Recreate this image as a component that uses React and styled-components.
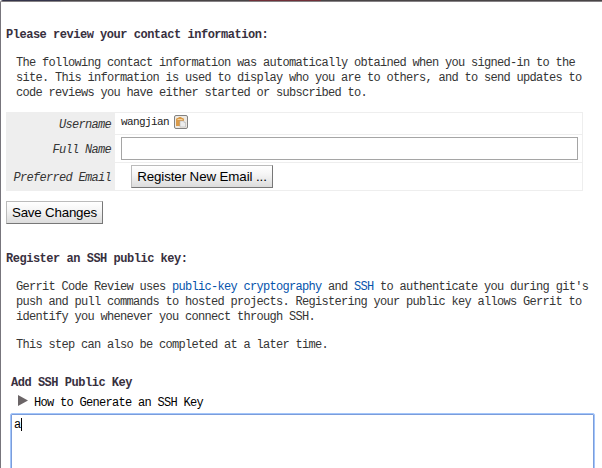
import React from "react";
import styled, { createGlobalStyle, css } from "styled-components";

const GlobalStyle = createGlobalStyle`
  * { box-sizing: border-box; }
  html, body { margin: 0; overflow: hidden; background: #fff; }
`;

const mono = css`
  font-family: "Liberation Mono", monospace;
  font-size: 12px;
  line-height: 15px;
  letter-spacing: -0.7px;
  white-space: pre;
`;

const Page = styled.main`
  width: 602px;
  height: 468px;
  overflow: hidden;
  display: flex;
  flex-direction: column;
  align-items: flex-start;
  background: #fff;
  color: #353535;
  border-left: 1px solid #77757c;
  border-radius: 3px 0 0 0;
  ${mono}
`;

const TopEdge = styled.div`
  width: 601px;
  height: 2px;
  flex: none;
  border-bottom: 1px solid #858184;
  background: linear-gradient(90deg, #34344a 0 60px, #484446 60px 248px, #702f38 248px 320px, #484446 320px);
`;

const Heading = styled.h2`
  margin: ${(p) => p.$margin};
  font-size: 12px;
  font-weight: 700;
  letter-spacing: -0.48px;
  color: #38303e;
`;

const Paragraph = styled.p`
  margin: ${(p) => p.$top}px 0 0 15px;
`;

const Link = styled.a`
  color: #0654ac;
  text-decoration: none;
`;

const InfoGrid = styled.div`
  display: grid;
  grid-template-columns: 109px 1fr;
  grid-template-rows: 22px 28px 28px;
  width: 577px;
  height: 79px;
  margin: 11px 0 0 5px;
  flex: none;
  border-top: 1px solid #eee;
  border-right: 1px solid #eee;
`;

const Label = styled.div`
  display: flex;
  align-items: center;
  justify-content: flex-end;
  padding: 2px 4px 0 0;
  background: #eee;
  font-style: italic;
`;

const Cell = styled.div`
  display: flex;
  align-items: center;
  padding-left: ${(p) => p.$indent || 6}px;
  padding-bottom: ${(p) => p.$lift || 0}px;
  border-bottom: 1px solid #eee;
`;

const Username = styled.span`
  padding-top: 1px;
  font-size: 11px;
  letter-spacing: -0.6px;
  width: 53px;
  color: #222;
`;

const NameInput = styled.input`
  width: 457px;
  height: 23px;
  border: 1px solid #a5a5a5;
  background: #fff;
  outline: none;
`;

const Button = styled.button`
  width: ${(p) => p.$width}px;
  height: 23px;
  margin: ${(p) => p.$margin || 0};
  padding: 0;
  flex: none;
  border: 1px solid;
  border-color: #bbb #777 #777 #bbb;
  background: linear-gradient(#fff 0%, #f5f5f5 40%, #dcdcdc 100%);
  color: #000;
  font: 13.333px/21px "Liberation Sans", Arial, sans-serif;
  letter-spacing: ${(p) => p.$spacing}px;
`;

const Disclosure = styled.div`
  display: flex;
  align-items: flex-start;
  gap: 6px;
  height: 15px;
  margin: 4px 0 0 17px;
  color: #000;
`;

const DisclosureLabel = styled.span`
  padding-top: 1px;
`;

const KeyEditor = styled.div`
  display: flex;
  width: 585px;
  height: 80px;
  margin: 3px 0 0 9px;
  padding: 4px 3px 0;
  flex: none;
  border: 1px solid #a3c6fb;
  border-radius: 2px 2px 0 0;
  box-shadow: inset 0 0 0 1px #7b9ddb;
  color: #000;
`;

const Caret = styled.span`
  width: 1px;
  height: 13px;
  background: #000;
`;

const ClipboardIcon = () => (
  <svg width="14" height="14" viewBox="0 0 14 14" aria-hidden="true">
    <rect x=".5" y=".5" width="13" height="13" rx="1.5" fill="#eee9e2" stroke="#828282" />
    <path d="M2 11V4l1-1h1l1-1h2l1 1h1l1 1v7Z" fill="#d99a4a" />
    <path d="M3.5 4h5v1h-5Z" fill="#f5d298" />
    <path d="M6 6h4l1.5 1.5V12H6Z" fill="#ededed" stroke="#b5b5b5" strokeWidth=".6" />
    <path d="M10 6v1.5h1.5" fill="#fff" stroke="#aaa" strokeWidth=".5" />
  </svg>
);

const Arrow = () => (
  <svg width="10" height="12" viewBox="0 0 10 12" aria-hidden="true">
    <path d="M0 0 10 5.5 0 11Z" fill="#6b6567" />
  </svg>
);

export default function App() {
  return (
    <>
      <GlobalStyle />
      <Page>
        <TopEdge />
        <Heading $margin="26px 0 0 5px">Please review your contact information:</Heading>
        <Paragraph $top={13}>{`The following contact information was automatically obtained when you signed-in to the
site. This information is used to display who you are to others, and to send updates to
code reviews you have either started or subscribed to.`}</Paragraph>
        <InfoGrid>
          <Label>Username</Label>
          <Cell $lift={3}><Username>wangjian</Username><ClipboardIcon /></Cell>
          <Label>Full Name</Label>
          <Cell><NameInput aria-label="Full Name" /></Cell>
          <Label>Preferred Email</Label>
          <Cell $indent={16}><Button $width={142} $spacing={-0.1}>Register New Email ...</Button></Cell>
        </InfoGrid>
        <Button $width={97} $spacing={-0.2} $margin="10px 0 0 5px">Save Changes</Button>
        <Heading $margin="28px 0 0 5px">Register an SSH public key:</Heading>
        <Paragraph $top={13}>
          Gerrit Code Review uses <Link>public-key cryptography</Link> and <Link>SSH</Link>{` to authenticate you during git's
push and pull commands to hosted projects. Registering your public key allows Gerrit to
identify you whenever you connect through SSH.`}
        </Paragraph>
        <Paragraph $top={13}>This step can also be completed at a later time.</Paragraph>
        <Heading $margin="23px 0 0 10px">Add SSH Public Key</Heading>
        <Disclosure><Arrow /><DisclosureLabel>How to Generate an SSH Key</DisclosureLabel></Disclosure>
        <KeyEditor>a<Caret /></KeyEditor>
      </Page>
    </>
  );
}
